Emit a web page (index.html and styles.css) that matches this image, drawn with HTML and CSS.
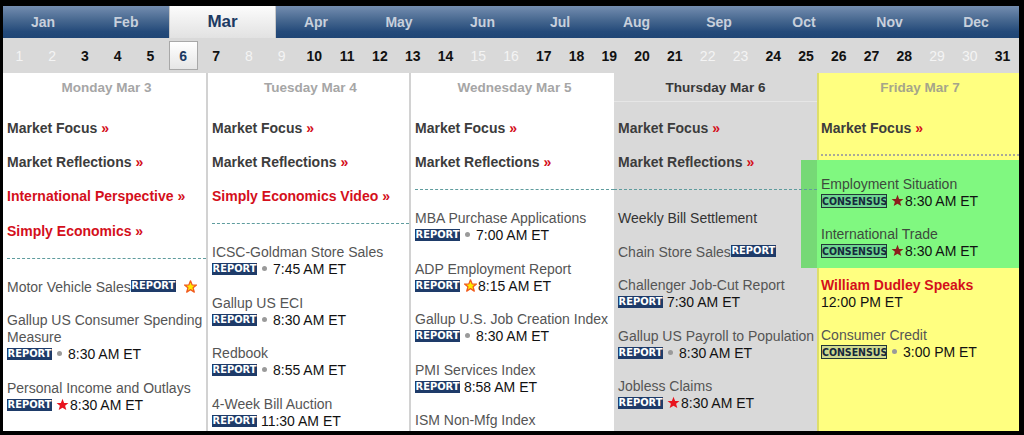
FILE: index.html
```html
<!DOCTYPE html>
<html lang="en">
<head>
<meta charset="utf-8">
<title>Economic Calendar</title>
<link rel="stylesheet" href="styles.css">
</head>
<body>
<div class="frame">
  <div class="page">
    <nav class="months">
      <div class="month">Jan</div>
      <div class="month">Feb</div>
      <div class="month active">Mar</div>
      <div class="month">Apr</div>
      <div class="month">May</div>
      <div class="month">Jun</div>
      <div class="month">Jul</div>
      <div class="month">Aug</div>
      <div class="month">Sep</div>
      <div class="month">Oct</div>
      <div class="month">Nov</div>
      <div class="month">Dec</div>
    </nav>
    <div class="days">
      <span class="day off">1</span><span class="day off">2</span><span class="day">3</span><span class="day">4</span><span class="day">5</span><span class="day"><span class="today">6</span></span><span class="day">7</span><span class="day off">8</span><span class="day off">9</span><span class="day">10</span><span class="day">11</span><span class="day">12</span><span class="day">13</span><span class="day">14</span><span class="day off">15</span><span class="day off">16</span><span class="day">17</span><span class="day">18</span><span class="day">19</span><span class="day">20</span><span class="day">21</span><span class="day off">22</span><span class="day off">23</span><span class="day">24</span><span class="day">25</span><span class="day">26</span><span class="day">27</span><span class="day">28</span><span class="day off">29</span><span class="day off">30</span><span class="day">31</span>
    </div>
    <div class="week">
      <section class="col col-sep">
        <div class="col-head">Monday Mar 3</div>
        <div class="links">
          <a class="link">Market Focus <span class="raquo">»</span></a>
          <a class="link">Market Reflections <span class="raquo">»</span></a>
          <a class="link red">International Perspective »</a>
          <a class="link red">Simply Economics »</a>
        </div>
        <div class="rule"></div>
        <div class="events">
          <div class="event"><div class="name">Motor Vehicle Sales<span class="report up">REPORT</span> <svg class="star" viewBox="0 0 24 24"><polygon class="star-outline" points="12,1.5 15,9 23,9.3 16.8,14.4 19,22.3 12,17.8 5,22.3 7.2,14.4 1,9.3 9,9"/></svg></div></div>
          <div class="event"><div class="name">Gallup US Consumer Spending Measure</div><div class="meta"><span class="report">REPORT</span><span class="dot"></span>8:30 AM ET</div></div>
          <div class="event"><div class="name">Personal Income and Outlays</div><div class="meta"><span class="report">REPORT</span><svg class="star" viewBox="0 0 24 24"><polygon class="star-red" points="12,1.5 15,9 23,9.3 16.8,14.4 19,22.3 12,17.8 5,22.3 7.2,14.4 1,9.3 9,9"/></svg>8:30 AM ET</div></div>
        </div>
      </section>
      <section class="col col-sep">
        <div class="col-head">Tuesday Mar 4</div>
        <div class="links">
          <a class="link">Market Focus <span class="raquo">»</span></a>
          <a class="link">Market Reflections <span class="raquo">»</span></a>
          <a class="link red">Simply Economics Video »</a>
        </div>
        <div class="rule"></div>
        <div class="events">
          <div class="event"><div class="name">ICSC-Goldman Store Sales</div><div class="meta"><span class="report">REPORT</span><span class="dot"></span>7:45 AM ET</div></div>
          <div class="event"><div class="name">Gallup US ECI</div><div class="meta"><span class="report">REPORT</span><span class="dot"></span>8:30 AM ET</div></div>
          <div class="event"><div class="name">Redbook</div><div class="meta"><span class="report">REPORT</span><span class="dot"></span>8:55 AM ET</div></div>
          <div class="event"><div class="name">4-Week Bill Auction</div><div class="meta"><span class="report">REPORT</span> 11:30 AM ET</div></div>
        </div>
      </section>
      <section class="col">
        <div class="col-head">Wednesday Mar 5</div>
        <div class="links">
          <a class="link">Market Focus <span class="raquo">»</span></a>
          <a class="link">Market Reflections <span class="raquo">»</span></a>
        </div>
        <div class="rule"></div>
        <div class="events">
          <div class="event"><div class="name">MBA Purchase Applications</div><div class="meta"><span class="report">REPORT</span><span class="dot"></span>7:00 AM ET</div></div>
          <div class="event"><div class="name">ADP Employment Report</div><div class="meta"><span class="report">REPORT</span><svg class="star" viewBox="0 0 24 24"><polygon class="star-outline" points="12,1.5 15,9 23,9.3 16.8,14.4 19,22.3 12,17.8 5,22.3 7.2,14.4 1,9.3 9,9"/></svg>8:15 AM ET</div></div>
          <div class="event"><div class="name">Gallup U.S. Job Creation Index</div><div class="meta"><span class="report">REPORT</span><span class="dot"></span>8:30 AM ET</div></div>
          <div class="event"><div class="name">PMI Services Index</div><div class="meta"><span class="report">REPORT</span> 8:58 AM ET</div></div>
          <div class="event"><div class="name">ISM Non-Mfg Index</div><div class="meta"><span class="report">REPORT</span><svg class="star" viewBox="0 0 24 24"><polygon class="star-red" points="12,1.5 15,9 23,9.3 16.8,14.4 19,22.3 12,17.8 5,22.3 7.2,14.4 1,9.3 9,9"/></svg>10:00 AM ET</div></div>
        </div>
      </section>
      <section class="col col-today">
        <div class="col-head">Thursday Mar 6</div>
        <div class="links">
          <a class="link">Market Focus <span class="raquo">»</span></a>
          <a class="link">Market Reflections <span class="raquo">»</span></a>
        </div>
        <div class="rule"></div>
        <div class="events">
          <div class="event"><div class="name dark">Weekly Bill Settlement</div></div>
          <div class="event"><div class="name">Chain Store Sales<span class="report up">REPORT</span></div></div>
          <div class="event"><div class="name">Challenger Job-Cut Report</div><div class="meta"><span class="report">REPORT</span> 7:30 AM ET</div></div>
          <div class="event"><div class="name">Gallup US Payroll to Population</div><div class="meta"><span class="report">REPORT</span><span class="dot"></span>8:30 AM ET</div></div>
          <div class="event"><div class="name">Jobless Claims</div><div class="meta"><span class="report">REPORT</span><svg class="star" viewBox="0 0 24 24"><polygon class="star-red" points="12,1.5 15,9 23,9.3 16.8,14.4 19,22.3 12,17.8 5,22.3 7.2,14.4 1,9.3 9,9"/></svg>8:30 AM ET</div></div>
          <div class="event"><div class="name">Productivity and Costs</div><div class="meta"><span class="report">REPORT</span><svg class="star" viewBox="0 0 24 24"><polygon class="star-red" points="12,1.5 15,9 23,9.3 16.8,14.4 19,22.3 12,17.8 5,22.3 7.2,14.4 1,9.3 9,9"/></svg>8:30 AM ET</div></div>
        </div>
      </section>
      <section class="col col-fri">
        <div class="col-head">Friday Mar 7</div>
        <div class="links">
          <a class="link">Market Focus <span class="raquo">»</span></a>
        </div>
        <div class="rule rule-fri"></div>
        <div class="events">
          <div class="event"><div class="name hl">Employment Situation</div><div class="meta"><span class="consensus">CONSENSUS</span><svg class="star" viewBox="0 0 24 24"><polygon class="star-dark" points="12,1.5 15,9 23,9.3 16.8,14.4 19,22.3 12,17.8 5,22.3 7.2,14.4 1,9.3 9,9"/></svg>8:30 AM ET</div></div>
          <div class="event"><div class="name hl">International Trade</div><div class="meta"><span class="consensus">CONSENSUS</span><svg class="star" viewBox="0 0 24 24"><polygon class="star-dark" points="12,1.5 15,9 23,9.3 16.8,14.4 19,22.3 12,17.8 5,22.3 7.2,14.4 1,9.3 9,9"/></svg>8:30 AM ET</div></div>
          <div class="event"><div class="name speaker">William Dudley Speaks</div><div class="meta">12:00 PM ET</div></div>
          <div class="event"><div class="name">Consumer Credit</div><div class="meta"><span class="consensus">CONSENSUS</span><span class="dot"></span>3:00 PM ET</div></div>
        </div>
      </section>
      <div class="highlight"></div>
    </div>
  </div>
</div>
</body>
</html>
```
FILE: styles.css
```css
* { box-sizing: border-box; }

html, body {
  margin: 0;
  padding: 0;
  background: #000;
}

.frame {
  width: 1024px;
  height: 435px;
  padding: 6px 5px 4px 3px;
  background: #000;
  overflow: hidden;
  font-family: "Liberation Sans", Arial, sans-serif;
}

.page {
  width: 1016px;
  height: 425px;
  background: #fff;
  overflow: hidden;
}

/* month tabs */
.months {
  display: grid;
  grid-template-columns: 80px 86px 107px 80px 86px 81px 74px 79px 86px 84px 87px 86px;
  height: 32px;
  background: linear-gradient(#748db0, #46678f 45%, #244a7a 80%, #1f4575);
}

.month {
  display: flex;
  align-items: center;
  justify-content: center;
  color: #c8d0dc;
  font-weight: bold;
  font-size: 14px;
}

.month.active {
  background: linear-gradient(#fcfcfc, #ececec 60%, #e2e2e2);
  border-left: 1px solid #c9c9c9;
  border-right: 1px solid #c9c9c9;
  color: #1c3a63;
  font-size: 17px;
}

/* day strip */
.days {
  display: grid;
  grid-template-columns: repeat(31, 1fr);
  align-items: center;
  height: 35px;
  background: #d9d9d9;
}

.day {
  display: flex;
  justify-content: center;
  font-weight: bold;
  font-size: 14px;
  color: #111;
}

.day.off {
  font-weight: normal;
  color: #f4f4f4;
}

.today {
  display: flex;
  align-items: center;
  justify-content: center;
  width: 29px;
  height: 29px;
  border: 1px solid #a8a8a8;
  background: linear-gradient(#ffffff, #f0f0f0 60%, #e6e6e6);
  color: #1c3a63;
}

/* week columns */
.week {
  position: relative;
  display: grid;
  grid-template-columns: 205px 203px 203px 203px 202px;
  height: 358px;
  overflow: hidden;
}

.col {
  padding-left: 4px;
  background: #fff;
}

.col-sep {
  border-right: 2px solid #d2d2d2;
}

.col-today {
  background: #d9d9d9;
}

.col-fri {
  background: #ffff80;
  border-left: 2px solid #dede6a;
  padding-left: 2px;
}

.col-head {
  height: 29px;
  line-height: 29px;
  text-align: center;
  font-weight: bold;
  font-size: 13.5px;
  color: #a6a6a6;
  border-bottom: 1px solid transparent;
}

.col-today .col-head {
  color: #383838;
  border-bottom-color: #e6e6e6;
  margin-left: -4px;
}

.col-fri .col-head {
  color: #a5a58a;
}

.links {
  position: relative;
  z-index: 1;
  padding-top: 9px;
}

.link {
  display: block;
  padding: 8.7px 0;
  line-height: 17px;
  font-weight: bold;
  font-size: 14px;
  color: #3c3c3c;
  white-space: nowrap;
}

.link.red,
.raquo {
  color: #d40f1b;
}

.rule {
  position: relative;
  z-index: 1;
  margin-top: 9.3px;
  border-top: 1px dashed #5f9c9e;
}

.col-today .rule {
  margin-left: -4px;
}

.rule-fri {
  border-top: 2px dotted #a9a99a;
  margin-top: 8.5px;
}

.events {
  position: relative;
  z-index: 1;
  padding-top: 20px;
}

.event {
  margin-bottom: 16.5px;
}

.name {
  line-height: 17px;
  font-size: 14px;
  color: #555;
}

.name.dark {
  color: #333;
}

.name.hl {
  color: #3d4a3d;
}

.name.speaker {
  font-weight: bold;
  color: #d40f1b;
}

.meta {
  line-height: 17px;
  font-size: 14px;
  color: #111;
  white-space: nowrap;
}

.report {
  display: inline-block;
  width: 45px;
  height: 12px;
  line-height: 12px;
  vertical-align: -1px;
  background: #1e3b69;
  color: #fff;
  text-align: center;
  font-family: "DejaVu Sans Condensed", "DejaVu Sans", sans-serif;
  font-weight: bold;
  font-size: 11px;
  overflow: hidden;
}

.report.up {
  vertical-align: 0;
}

.consensus {
  display: inline-block;
  width: 66px;
  height: 14px;
  line-height: 12px;
  vertical-align: -2px;
  border: 1px solid #233636;
  background: rgba(40, 90, 200, 0.22);
  color: #15283c;
  text-align: center;
  font-family: "DejaVu Sans Condensed", "DejaVu Sans", sans-serif;
  font-weight: bold;
  font-size: 10.5px;
  overflow: hidden;
}

.dot {
  display: inline-block;
  width: 5px;
  height: 5px;
  margin: 0 6px 0 5px;
  border-radius: 50%;
  background: #9a9a9a;
  vertical-align: 3px;
}

.star {
  display: inline-block;
  width: 13px;
  height: 13px;
  margin: 0 1px 0 4px;
  vertical-align: -1px;
}

.star-red {
  fill: #e8141f;
}

.star-dark {
  fill: #8c1d1d;
}

.star-outline {
  fill: #ffea00;
  stroke: #f05a1e;
  stroke-width: 2.4;
  stroke-linejoin: round;
}

.highlight {
  position: absolute;
  z-index: 0;
  top: 87px;
  left: 798px;
  width: 218px;
  height: 108px;
  background: linear-gradient(to right, #76d976 0, #76d976 16px, #80f880 16px);
}
```
